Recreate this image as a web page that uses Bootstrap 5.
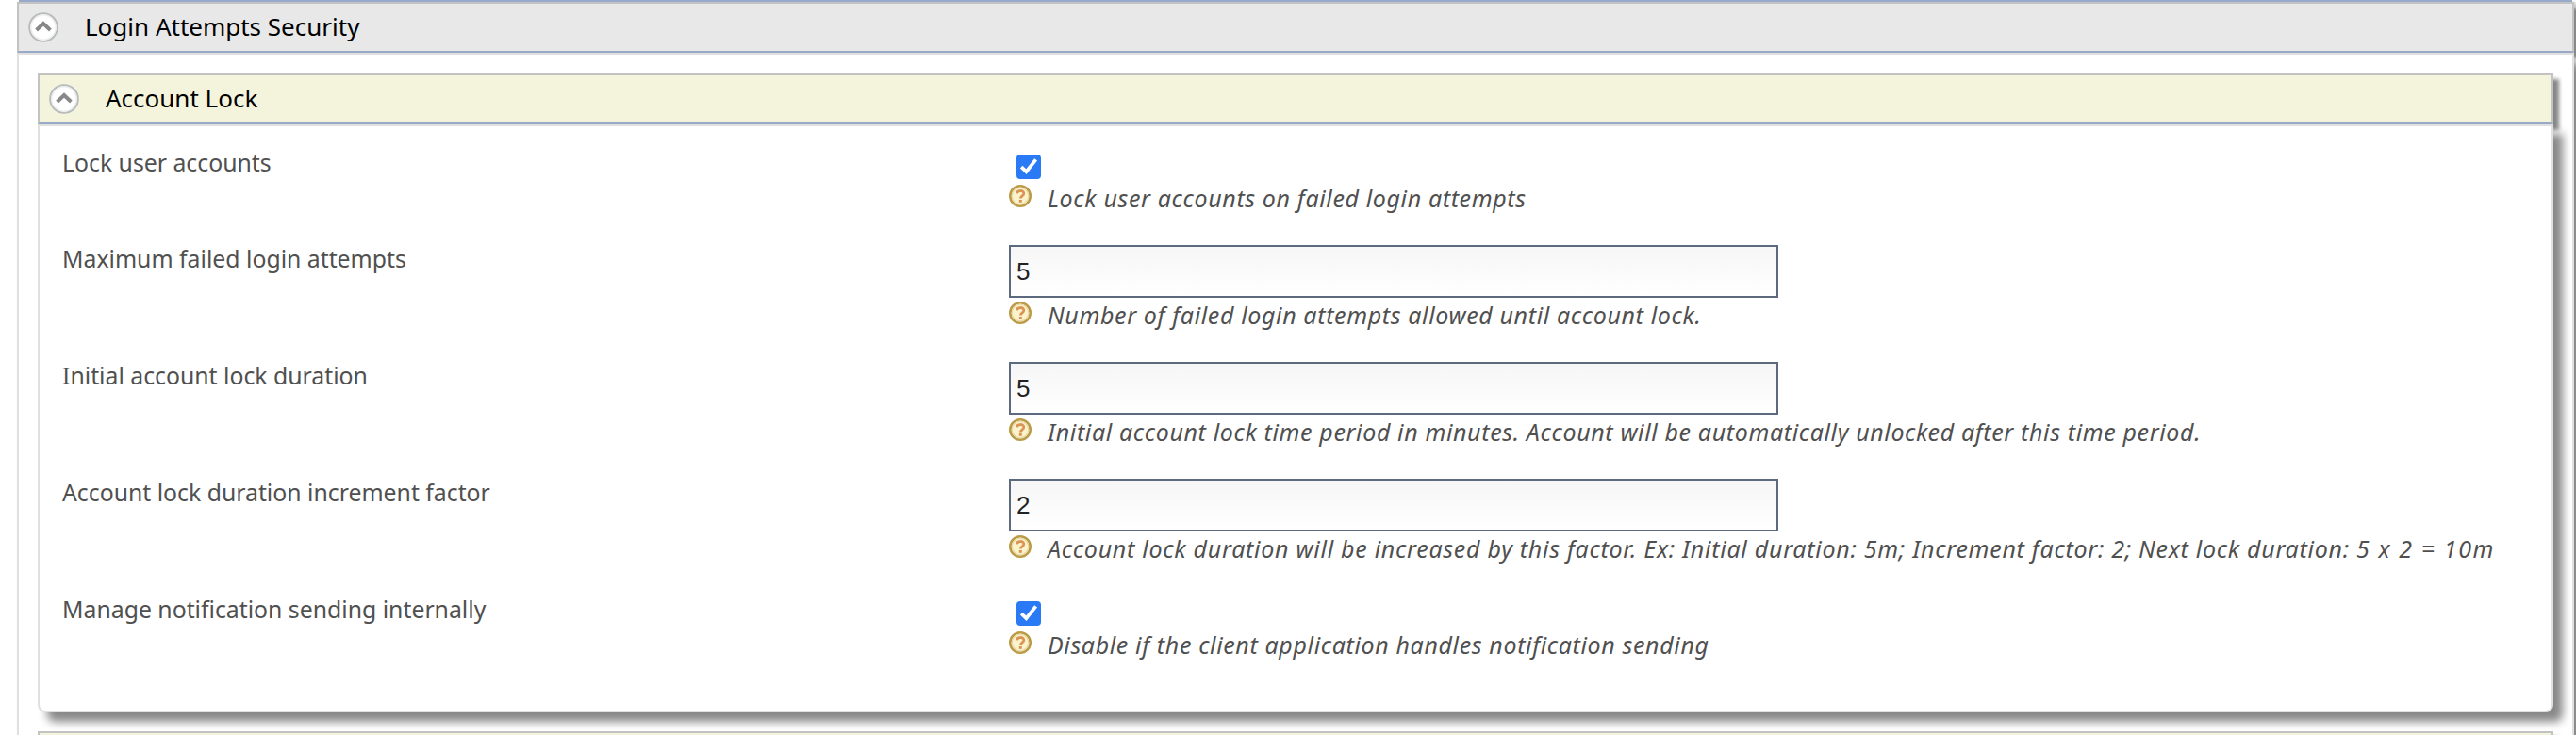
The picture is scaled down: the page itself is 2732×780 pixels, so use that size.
<!DOCTYPE html>
<html lang="en">
<head>
<meta charset="utf-8">
<title>Login Attempts Security</title>
<link href="https://cdn.jsdelivr.net/npm/bootstrap@5.3.0/dist/css/bootstrap.min.css" rel="stylesheet">
<style>
  body { font-family: "Noto Sans", sans-serif; color: #505050; background: #fff; height: 780px; overflow: hidden; }
  .outer-section { margin-left: 18px; width: 2712px; }
  .previous-edge { height: 2px; margin: 0 2px; background: #99a9cc; box-shadow: 6px 4px 4px #888; }
  .section-head { height: 54px; border: 2px solid #c3c3c3; border-bottom-color: #99a9c8; padding-left: 10px; font-size: 26px; line-height: 36px; color: #000; background: #e8e8e8; box-shadow: 6px 6px 4px #888; }
  .section-head .head-text { margin-left: 28px; margin-top: -3px; }
  .section-head.inner { background: #f4f4dc; }
  .section-body { border: 2px solid #e0e0e0; background: #fff; box-shadow: 10px 10px 10px #888; }
  .outer-body { height: 724px; padding: 20px 20px 0; border-bottom: 0; overflow: hidden; }
  .lock-body { height: 624px; padding: 22px 0 0 24px; border-radius: 0 0 8px 8px; }
  .lock-body, .outer-body { position: relative; }
  .next-head { margin-top: 20px; position: relative; }
  .setting { display: grid; grid-template-columns: 1004px 1fr; height: 124px; }
  .setting.check-row { height: 102px; }
  .setting-label { font-size: 24.8px; line-height: 32px; white-space: nowrap; }
  .number-field { width: 816px; height: 56px; margin-top: 2px; padding: 0 6px; border: 2px solid #5d6a7d; border-radius: 0; font: 26px "Liberation Sans", Arial, sans-serif; color: #222; background: linear-gradient(#f6f6f6, #fff); }
  .number-field:focus { box-shadow: none; }
  .tick-box { display: block; width: 26px; height: 26px; margin: 8px 0 6px 8px; }
  .hint { margin-top: 4px; height: 32px; font-size: 25px; font-style: italic; line-height: 32px; letter-spacing: .63px; white-space: nowrap; }
  .check-row .hint { margin-top: 0; }
  .hint svg { width: 24px; height: 24px; margin-right: 17px; flex: none; }
  .hint span { margin-top: -2px; }
  .hint.wide-hint { letter-spacing: .72px; }
  .formula { letter-spacing: 1.6px; }
</style>
</head>
<body>
<svg width="0" height="0" class="d-none">
  <symbol id="collapse" viewBox="0 0 32 32">
    <circle cx="16" cy="16" r="14.8" fill="#fff" stroke="#b7bbbd" stroke-width="2"/>
    <circle cx="16" cy="16" r="13.2" fill="none" stroke="#ececec" stroke-width="1.4"/>
    <path d="M8.6 19 16 12 23.4 19" fill="none" stroke="#888" stroke-width="3.9"/>
  </symbol>
  <symbol id="help" viewBox="0 0 24 24">
    <circle cx="12" cy="12" r="10.7" fill="#fbf3cc" stroke="#bb9b48" stroke-width="2.6"/>
    <circle cx="12" cy="12" r="8.8" fill="none" stroke="#e8d9a6" stroke-width="1.2"/>
    <path d="M8.4 9.4C8.6 5.6 15.8 5.6 15.8 9.2 15.8 11.8 12.3 11.8 12.3 14.6" fill="none" stroke="#dc9456" stroke-width="2.8"/>
    <rect x="10.8" y="16" width="3" height="2.8" fill="#dc9456"/>
  </symbol>
  <symbol id="tick" viewBox="0 0 26 26">
    <rect width="26" height="26" rx="4" fill="#2a7af6"/>
    <path d="M5.2 13.2 10.4 18.2 20.6 5.4" fill="none" stroke="#fff" stroke-width="3.7"/>
  </symbol>
</svg>

<main class="outer-section">
  <div class="previous-edge"></div>
  <div class="section-head d-flex align-items-center">
    <svg width="32" height="32"><use href="#collapse"/></svg>
    <span class="head-text">Login Attempts Security</span>
  </div>
  <div class="section-body outer-body">
    <div class="section-head inner d-flex align-items-center">
      <svg width="32" height="32"><use href="#collapse"/></svg>
      <span class="head-text">Account Lock</span>
    </div>
    <div class="section-body lock-body">
      <div class="setting check-row">
        <div class="setting-label">Lock user accounts</div>
        <div>
          <svg class="tick-box"><use href="#tick"/></svg>
          <div class="hint d-flex"><svg><use href="#help"/></svg><span>Lock user accounts on failed login attempts</span></div>
        </div>
      </div>
      <div class="setting">
        <div class="setting-label">Maximum failed login attempts</div>
        <div>
          <input class="form-control number-field" type="text" value="5">
          <div class="hint d-flex"><svg><use href="#help"/></svg><span>Number of failed login attempts allowed until account lock.</span></div>
        </div>
      </div>
      <div class="setting">
        <div class="setting-label">Initial account lock duration</div>
        <div>
          <input class="form-control number-field" type="text" value="5">
          <div class="hint d-flex"><svg><use href="#help"/></svg><span>Initial account lock time period in minutes. Account will be automatically unlocked after this time period.</span></div>
        </div>
      </div>
      <div class="setting">
        <div class="setting-label">Account lock duration increment factor</div>
        <div>
          <input class="form-control number-field" type="text" value="2">
          <div class="hint wide-hint d-flex"><svg><use href="#help"/></svg><span>Account lock duration will be increased by this factor. Ex: Initial duration: 5m; Increment factor: 2; Next lock duration: <span class="formula">5 x 2 = 10m</span></span></div>
        </div>
      </div>
      <div class="setting check-row">
        <div class="setting-label">Manage notification sending internally</div>
        <div>
          <svg class="tick-box"><use href="#tick"/></svg>
          <div class="hint d-flex"><svg><use href="#help"/></svg><span>Disable if the client application handles notification sending</span></div>
        </div>
      </div>
    </div>
    <div class="section-head inner next-head"></div>
  </div>
</main>
<script src="https://cdn.jsdelivr.net/npm/bootstrap@5.3.0/dist/js/bootstrap.bundle.min.js"></script>
</body>
</html>
